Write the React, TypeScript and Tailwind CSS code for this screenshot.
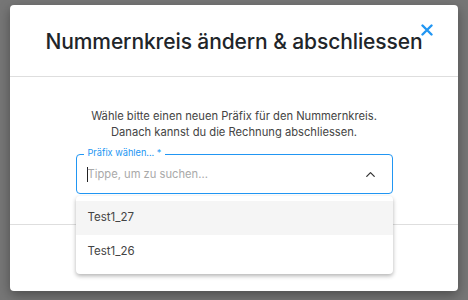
import { ChevronUp } from "lucide-react";

const options = ["Test1_27", "Test1_26"];

export default function App() {
	return (
		<div
			className="h-[300px] w-[468px] overflow-hidden bg-[#767676] px-[10px] pt-[5px]"
			style={{ fontFamily: "Inter, 'Noto Sans', sans-serif" }}
		>
			<div className="flex h-[286px] flex-col rounded-[4px] bg-white shadow-[0_4px_12px_rgba(0,0,0,0.35)]">
				<header className="relative flex h-[72px] shrink-0 items-center justify-center border-b border-[#dedede]">
					<h2 className="pt-[2px] text-[21px] font-medium tracking-[-0.1px] text-[#212529]">
						Nummernkreis ändern &amp; abschliessen
					</h2>
					<button
						type="button"
						aria-label="Schliessen"
						className="absolute left-[410px] top-[18px] grid h-[14px] w-[14px] place-items-center"
					>
						<svg width="12" height="12" viewBox="0 0 12 12">
							<path
								d="M1.5 1.5 L10.5 10.5 M10.5 1.5 L1.5 10.5"
								stroke="#2196f3"
								strokeWidth="2.4"
								strokeLinecap="round"
							/>
						</svg>
					</button>
				</header>

				<div className="flex h-[148px] shrink-0 flex-col items-center border-b border-[#dedede] pt-[31px]">
					<p className="text-center text-[11.2px] leading-[16px] text-[#444]">
						Wähle bitte einen neuen Präfix für den Nummernkreis.
						<br />
						Danach kannst du die Rechnung abschliessen.
					</p>

					<div className="relative mt-[14px] w-[317px]">
						<div className="flex h-[40px] items-center rounded-[4px] border border-[#2196f3] pl-[10px] pr-[14px]">
							<span className="h-[15px] w-px bg-[#222]" />
							<span className="flex-1 text-[11.2px] text-[#a9a9a9]">
								Tippe, um zu suchen...
							</span>
							<ChevronUp size={15} strokeWidth={2} className="text-[#333]" />
						</div>
						<span className="absolute left-[8px] top-[-7px] bg-white px-[4px] text-[9.2px] leading-[12px] text-[#2196f3]">
							Präfix wählen... *
						</span>

						<ul className="absolute left-0 top-full z-10 mt-[2px] w-full rounded-[4px] bg-white py-[5px] shadow-[0_2px_4px_rgba(0,0,0,0.3)]">
							{options.map((option, i) => (
								<li
									key={option}
									className={`flex h-[34px] items-center px-[12px] text-[11.5px] text-[#444] ${i === 0 ? "bg-[#f5f5f5]" : ""}`}
								>
									{option}
								</li>
							))}
						</ul>
					</div>
				</div>

				<footer className="flex-1" />
			</div>
		</div>
	);
}
